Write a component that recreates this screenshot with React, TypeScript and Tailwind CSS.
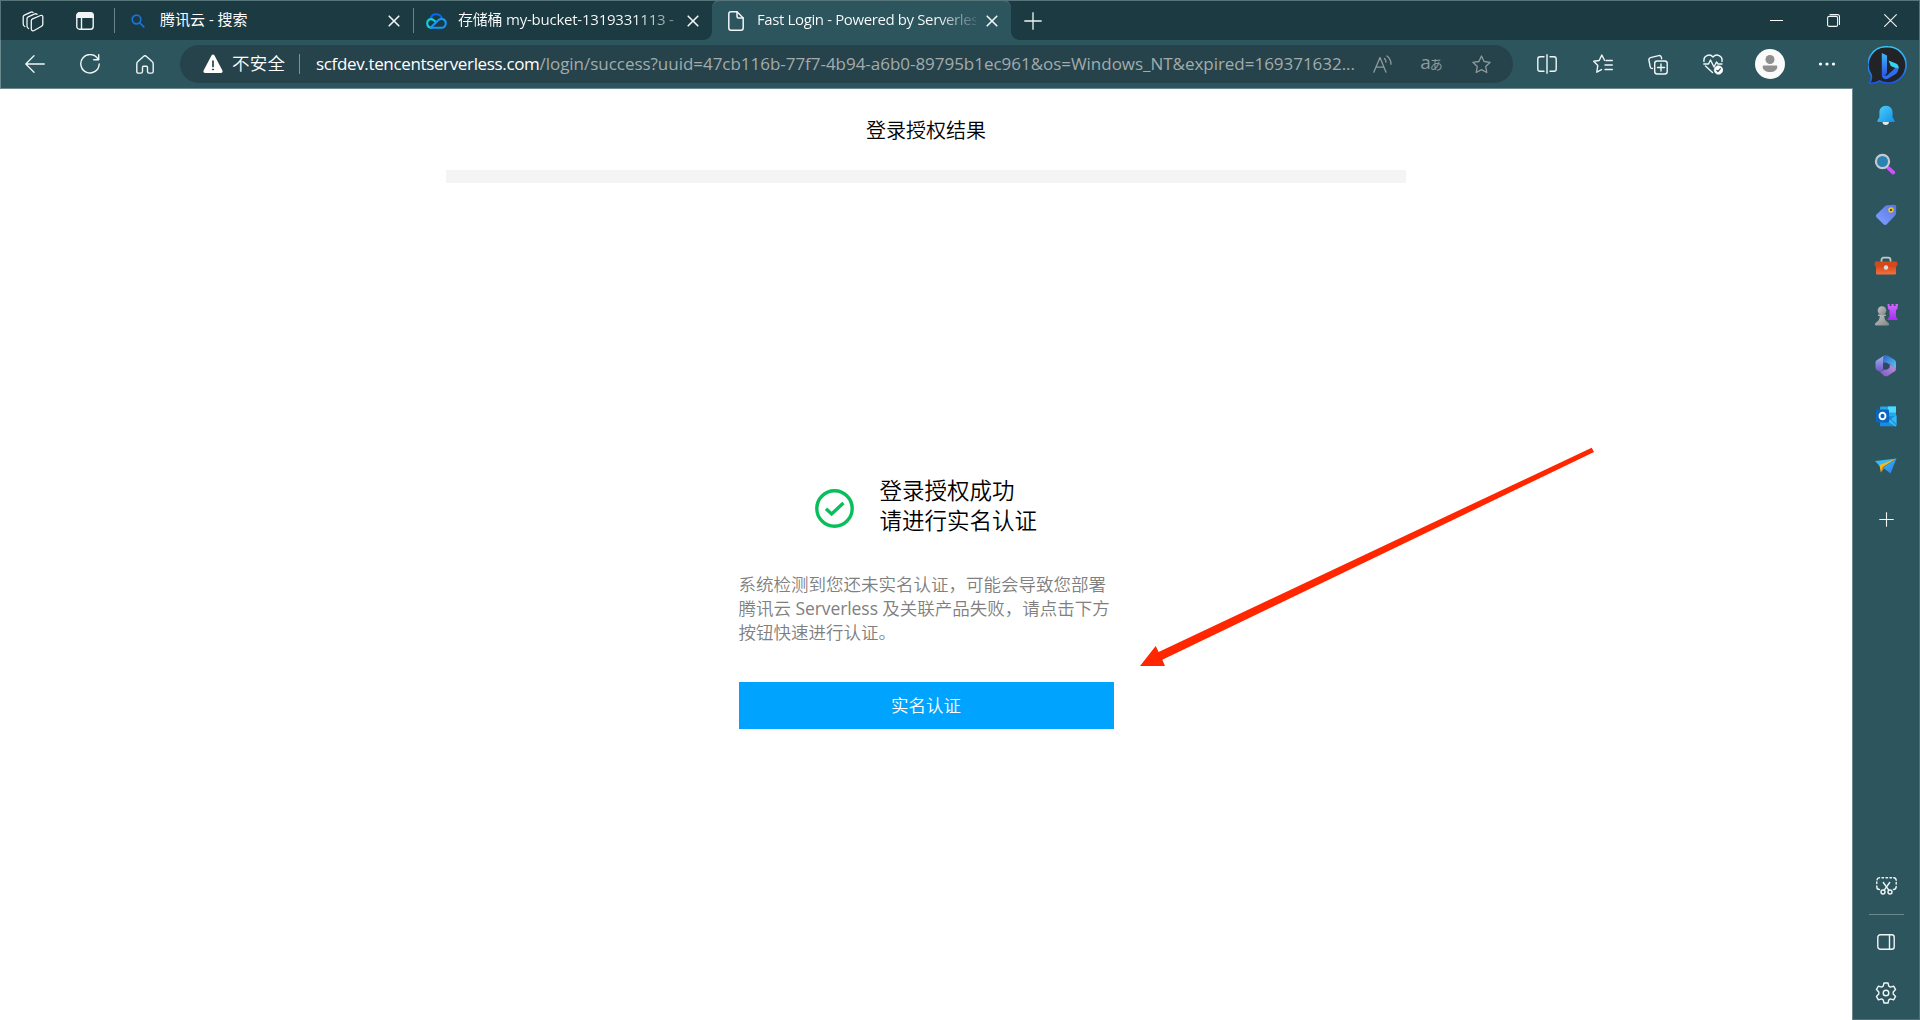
import React from "react";

type SvgProps = { w: number; h: number; children: React.ReactNode; color?: string; sw?: number };

function Svg({ w, h, children, color = "#f1f5f6", sw = 1.3 }: SvgProps) {
  return (
    <svg
      width={w}
      height={h}
      viewBox={`0 0 ${w} ${h}`}
      fill="none"
      stroke={color}
      strokeWidth={sw}
      strokeLinecap="round"
      strokeLinejoin="round"
      className="block shrink-0"
    >
      {children}
    </svg>
  );
}

function Cell({ className, children }: { className: string; children: React.ReactNode }) {
  return <div className={`flex shrink-0 items-center justify-center ${className}`}>{children}</div>;
}

const CloseTab = () => (
  <Svg w={12} h={12} sw={1.6}>
    <path d="M1.2 1.2 10.8 10.8M10.8 1.2 1.2 10.8" />
  </Svg>
);

const Plus = ({ size }: { size: number }) => (
  <svg width={size} height={size} viewBox="0 0 18 18" stroke="#f1f5f6" strokeWidth="1.3" className="block">
    <path d="M9 .3v17.4M.3 9h17.4" />
  </svg>
);

function TitleBar() {
  return (
    <div className="flex h-10 w-full shrink-0 items-center border-x border-t border-[#56757b] bg-[#1b3a42]">
      <Cell className="ml-[5px] w-[53px]">
        <Svg w={22} h={22} sw={1.3}>
          <path d="M1.2 14V7c0-.9.4-1.500 1.200-1.900l6.600-3c.8-.3 1.600-.1 2.100.3M1.200 14c0 1.300.5 2 1.600 2.500M5 16V8.800c0-.9.4-1.500 1.200-1.900l6.600-3c.9-.3 1.700-.1 2.200.4M5 16c0 1.300.500 2 1.600 2.500" />
          <path d="M10.600 8.900 18.500 5.500c1.200-.5 2.300.2 2.300 1.500v7.300c0 .9-.4 1.500-1.200 1.900l-7.400 4.300c-1.200.7-2.900.1-2.900-1.600v-8.100c0-.9.500-1.500 1.300-1.900Z" />
        </Svg>
      </Cell>
      <Cell className="w-[51px]">
        <Svg w={18} h={18} sw={1.4}>
          <rect x=".8" y=".8" width="16.4" height="16.4" rx="2.8" />
          <path d="M.8 5.2h16.4M5.500 5v12" />
          <path d="M1 5V3.500Q1 1 3.500 1h11Q17 1 17 3.500V5Z" fill="#f1f5f6" />
        </Svg>
      </Cell>
      <div className="ml-[4px] h-[25px] w-px bg-[#6b8388]" />

      <div className="flex h-full w-[298px] items-center">
        <Cell className="ml-[16px] w-[14px]">
          <Svg w={14} h={14} color="#1a73d6" sw={1.7}>
            <circle cx="5.500" cy="5.500" r="4.300" />
            <path d="m8.800 8.800 4 4" />
          </Svg>
        </Cell>
        <span className="mb-[2px] ml-[15px] w-[217px] whitespace-nowrap text-[15px] text-white">腾讯云 - 搜索</span>
        <Cell className="w-[34px]">
          <CloseTab />
        </Cell>
      </div>
      <div className="h-[25px] w-px bg-[#6b8388]" />

      <div className="flex h-full w-[298px] items-center">
        <Cell className="ml-[12px] w-[21px]">
          <Svg w={21} h={16} sw={2.1}>
            <path d="M4.600 6.200C5 3.200 7.200 1.300 10.200 1.300c2.700 0 4.800 1.500 5.700 4" stroke="#0a66f5" />
            <path d="M10.200 9.200 7.800 7.200C4.500 4.600 1.100 7 1.200 10.200c.1 2.700 2 4.500 4.500 4.500" stroke="#12d4d8" />
            <path d="M5.700 14.700h9.800c2.500 0 4.300-1.900 4.300-4.400 0-4-4.600-5.800-7.300-3.200L5 14.200" stroke="#1597f8" />
          </Svg>
        </Cell>
        <span className="mb-[2px] ml-[11px] w-[220px] overflow-hidden whitespace-nowrap bg-gradient-to-r from-white from-80% to-[#1b3a42] to-115% bg-clip-text text-[15px] tracking-[-0.23px] text-transparent">
          存储桶 my-bucket-1319331113 -
        </span>
        <Cell className="w-[30px]">
          <CloseTab />
        </Cell>
      </div>

      <div className="relative -mt-px flex h-10 w-[299px] items-center rounded-t-lg border-t border-[#56757b] bg-[#2d555e]">
        <span className="absolute bottom-0 -left-2 h-2 w-2 bg-[radial-gradient(circle_at_0_0,#1b3a42_7.5px,#2d555e_8px)]" />
        <span className="absolute -right-2 bottom-0 h-2 w-2 bg-[radial-gradient(circle_at_100%_0,#1b3a42_7.5px,#2d555e_8px)]" />
        <Cell className="ml-[15px] w-[17px]">
          <Svg w={16} h={20} sw={1.5}>
            <path d="M9 .8H3C1.700.8.8 1.700.8 3v14c0 1.300.9 2.200 2.200 2.200h10c1.300 0 2.200-.9 2.200-2.200V7L9 .8Z" />
            <path d="M9 1v4.500C9 6.500 9.500 7 10.500 7H15" />
          </Svg>
        </Cell>
        <span className="mb-[2px] ml-[13px] w-[219px] overflow-hidden whitespace-nowrap bg-gradient-to-r from-white from-82% to-[#2d555e] to-103% bg-clip-text text-[15px] tracking-[-0.38px] text-transparent">
          Fast Login - Powered by Serverles
        </span>
        <Cell className="w-[32px]">
          <CloseTab />
        </Cell>
      </div>
      <Cell className="ml-[12px] w-[20px]">
        <Plus size={18} />
      </Cell>

      <div className="ml-auto flex items-center">
        <Cell className="w-[58px]">
          <div className="h-px w-[13px] bg-white" />
        </Cell>
        <Cell className="w-[57px]">
          <Svg w={13} h={13} sw={1.1}>
            <rect x=".6" y="2.400" width="10" height="10" rx="1.500" />
            <path d="M3 .6h7.500c1.200 0 2 .8 2 2v7.800" />
          </Svg>
        </Cell>
        <Cell className="w-[57px]">
          <Svg w={13} h={13} sw={1.1}>
            <path d="m.6.6 11.800 11.800M12.400.6.6 12.400" />
          </Svg>
        </Cell>
      </div>
    </div>
  );
}

const STAR = "m9.500 1 2.600 5.500 6 .800-4.400 4.200 1.100 6-5.300-2.900-5.300 2.900 1.100-6L.9 7.300l6-.8L9.500 1Z";

function Toolbar() {
  return (
    <div className="flex h-[49px] shrink-0 items-center border-b border-l border-[#6b888e] bg-[#2d555e] pl-[6.5px]">
      <Cell className="w-[55px]">
        <Svg w={20} h={18}>
          <path d="M19.300 9H.8M9 .8.8 9 9 17.200" />
        </Svg>
      </Cell>
      <Cell className="w-[55px]">
        <Svg w={20} h={20} sw={1.4}>
          <path d="M18 5.200A9.200 9.200 0 1 0 19.200 10" />
          <path d="M18.700.8v5h-5" />
        </Svg>
      </Cell>
      <Cell className="w-[55px]">
        <Svg w={18} h={19} sw={1.4}>
          <path d="M7.800 1.200c.7-.6 1.700-.6 2.400 0l5.900 5.300c.700.600 1.100 1.500 1.100 2.400v7.600c0 .900-.7 1.600-1.600 1.600h-2.500c-.9 0-1.600-.7-1.600-1.600v-4.200c0-.6-.4-1-1-1h-3c-.6 0-1 .4-1 1v4.200c0 .9-.7 1.600-1.600 1.600H2.400c-.9 0-1.600-.7-1.600-1.600V8.900c0-.9.4-1.800 1.100-2.400l5.900-5.300Z" />
        </Svg>
      </Cell>

      <div className="ml-[7.5px] flex h-[38px] w-[1333px] shrink-0 items-center rounded-full bg-[#26434b] pl-[23px]">
        <Svg w={20} h={20} sw={1}>
          <path d="M8.600 1.200c.6-1 2.200-1 2.800 0l8 15.200c.6 1.200-.1 2.600-1.400 2.600H2c-1.300 0-2-1.400-1.400-2.600l8-15.200Z" fill="#fff" stroke="none" />
          <path d="M10 7v5.500" stroke="#26434b" strokeWidth="1.700" />
          <circle cx="10" cy="15.500" r=".6" fill="#26434b" stroke="#26434b" />
        </Svg>
        <span className="mb-[1px] ml-[9px] w-[53px] whitespace-nowrap text-[17.500px] tracking-[0.2px] font-[350] text-white">不安全</span>
        <div className="ml-[14px] h-[20px] w-px bg-[#7d9095]" />
        <div className="mb-[1px] ml-[16px] w-[1041px] overflow-hidden whitespace-nowrap text-[17px] text-[#a3abad]">
          <span className="tracking-[-0.35px] text-white">scfdev.tencentserverless.com</span>
          <span className="tracking-[-0.03px]">
            /login/success?uuid=47cb116b-77f7-4b94-a6b0-89795b1ec961&amp;os=Windows_NT&amp;expired=169371632...
          </span>
        </div>
        <Cell className="w-[50px]">
          <Svg w={19} h={18} color="#8e9a9d">
            <path d="M.8 17.200 7 2.500l6 14.700M3 12.200h7.800M11.500 3.500c1 1 1.500 2.200 1.500 3.700M14 .9c2.600 2 4 4.800 4 8.300" />
          </Svg>
        </Cell>
        <Cell className="w-[49px]">
          <span className="mb-[3px] flex items-baseline text-[#8e9a9d]">
            <span className="text-[19px] leading-none">a</span>
            <span className="-ml-px text-[13px] leading-none">あ</span>
          </span>
        </Cell>
        <Cell className="w-[50px]">
          <Svg w={19} h={19} color="#8e9a9d">
            <path d={STAR} />
          </Svg>
        </Cell>
      </div>

      <Cell className="ml-[6.5px] w-[55px]">
        <Svg w={20} h={20} sw={1.4}>
          <path d="M7 2.700H3C1.700 2.700.8 3.600.8 4.900v10.200c0 1.300.9 2.200 2.200 2.200h4M13 2.700h4c1.300 0 2.200.9 2.200 2.200v10.200c0 1.300-.9 2.200-2.200 2.200h-4M10 .8v18.400" />
        </Svg>
      </Cell>
      <Cell className="w-[56px]">
        <Svg w={20} h={20} sw={1.4}>
          <path d="M11.500 6.300 8.800 1 6.200 6.500l-5.500.8 4.100 4.200-1 6.700 4.700-2.600M13 6.500h6.300M12 11h7.300M12 15.500h7.300" />
        </Svg>
      </Cell>
      <Cell className="w-[55px]">
        <Svg w={20} h={21} sw={1.4}>
          <path d="M4.500 14.500c-1.300 0-2-.5-2.300-1.700L.9 6c-.2-1.300.4-2.100 1.600-2.400l8.200-2c1.200-.3 2.100.2 2.500 1.400l.5 1.700" />
          <rect x="6.700" y="7" width="12.500" height="13" rx="2.500" />
          <path d="M13 10v7M9.500 13.500h7" />
        </Svg>
      </Cell>
      <Cell className="w-[55px]">
        <Svg w={20} h={21} sw={1.4}>
          <path d="M9.500 18.500 2.500 12M1 7.500C.1 2 6.500-1 10 3c3.500-4 9.900-1 9 4.500M.8 10h4.700L7.500 6l3.500 7 2.500-5 1.500 2h4" />
          <circle cx="15.500" cy="16" r="4.300" fill="#fff" stroke="#fff" strokeWidth=".6" />
          <path d="m13.700 16.300 1.300 1.200 2.400-2.800" stroke="#2d555e" strokeWidth="1.200" />
        </Svg>
      </Cell>
      <Cell className="w-[59px]">
        <svg width="30" height="30" viewBox="0 0 30 30" className="block">
          <circle cx="15" cy="15" r="15" fill="#fafafa" />
          <circle cx="15" cy="10.500" r="4.500" fill="#8f8f8f" />
          <path d="M9 16.500h12c.8 0 1.300.5 1.300 1.300 0 3.200-3 5.300-7.300 5.300s-7.300-2.100-7.300-5.300c0-.8.5-1.300 1.300-1.300Z" fill="#8f8f8f" />
        </svg>
      </Cell>
      <Cell className="w-[56px]">
        <svg width="18" height="4" viewBox="0 0 18 4" fill="#fff" className="mr-[1px] mb-[1px] block">
          <circle cx="2.500" cy="2" r="1.600" />
          <circle cx="9" cy="2" r="1.600" />
          <circle cx="15.500" cy="2" r="1.600" />
        </svg>
      </Cell>
    </div>
  );
}

function Gradients() {
  return (
    <svg width="0" height="0" className="absolute">
      <defs>
        <linearGradient id="ring" x1="0" y1="0" x2="0" y2="1">
          <stop offset="0" stopColor="#35c8f5" />
          <stop offset="1" stopColor="#1b55e8" />
        </linearGradient>
        <linearGradient id="bstem" x1="0" y1="0" x2="0" y2="1">
          <stop offset="0" stopColor="#3fb6f5" />
          <stop offset="1" stopColor="#2a4fe0" />
        </linearGradient>
        <linearGradient id="bell" x1="0" y1="0" x2="1" y2="1">
          <stop offset="0" stopColor="#4fd0fb" />
          <stop offset="1" stopColor="#1390e6" />
        </linearGradient>
        <linearGradient id="tag" x1="1" y1="0" x2="0" y2="1">
          <stop offset="0" stopColor="#5b72e8" />
          <stop offset="1" stopColor="#7fa4ff" />
        </linearGradient>
        <linearGradient id="box" x1="0" y1="0" x2="0" y2="1">
          <stop offset="0" stopColor="#cf3f12" />
          <stop offset="1" stopColor="#f4713f" />
        </linearGradient>
        <linearGradient id="rook" x1="0" y1="0" x2="0" y2="1">
          <stop offset="0" stopColor="#d468ff" />
          <stop offset="1" stopColor="#a42df0" />
        </linearGradient>
        <linearGradient id="pawn" x1="0" y1="0" x2="1" y2="1">
          <stop offset="0" stopColor="#c4c4c4" />
          <stop offset="1" stopColor="#858585" />
        </linearGradient>
        <linearGradient id="m1" x1="0" y1="0" x2="1" y2="1">
          <stop offset="0" stopColor="#2f62c8" />
          <stop offset="1" stopColor="#58c7f5" />
        </linearGradient>
        <linearGradient id="m2" x1="0" y1="0" x2="0" y2="1">
          <stop offset="0" stopColor="#9db8ee" />
          <stop offset="1" stopColor="#7154c4" />
        </linearGradient>
        <linearGradient id="m3" x1="1" y1="0" x2="0" y2="1">
          <stop offset="0" stopColor="#c494e0" />
          <stop offset="1" stopColor="#7a58c4" />
        </linearGradient>
        <linearGradient id="plane" x1="0" y1="0" x2="1" y2="1">
          <stop offset="0" stopColor="#36c3f2" />
          <stop offset="1" stopColor="#2f73ee" />
        </linearGradient>
      </defs>
    </svg>
  );
}

function Sidebar() {
  return (
    <aside className="relative flex w-[67px] shrink-0 flex-col items-center border-r border-b border-[#4f7078] bg-[#2d555e]">
      <Gradients />
      <Cell className="mt-[4px] ml-[2px] h-[42px]">
        <svg width="39" height="41" viewBox="0 0 39 41" className="block">
          <path d="M20 1.800A17.800 17.800 0 0 1 20 38c-3 0-5.700-.6-8.300-2-2.700 2-6 2.500-10.200 2.200 2.200-2.700 2.400-4.700 1.600-8.500A18 18 0 0 1 20 1.800Z" fill="#212326" stroke="url(#ring)" strokeWidth="1.600" />
          <path d="m13.800 8 5.200 2.500v17l-2.500 4.700-2.700-2.200V8Z" fill="url(#bstem)" />
          <path d="m20.500 15.500 7.500 3c2.500 1.200 3.200 3.500 2.300 5.800l-3.500-1.600-4-1.800-2.300-5.400Z" fill="#35d2f4" />
          <path d="M13.800 29.500c1.500 2 3.500 2 5.200.9l8.500-7.700 2.800.8c.2 2.500-1 4.500-3 5.700l-7.500 4.500c-3.500 1.500-6-.7-6-4.200Z" fill="#2f6df0" />
        </svg>
      </Cell>
      <Cell className="mt-[4px] h-[50px]">
        <svg width="20" height="21" viewBox="0 0 20 21" className="block">
          <path d="M6.500 17h6.500c0 4-6.500 4-6.500 0Z" fill="#e8e8e8" />
          <path d="M10 .7c4.200 0 6.600 3 6.600 7v4.500l2 3.300c.3.700 0 1.500-.9 1.500H2.300c-.9 0-1.200-.8-.9-1.500l2-3.300V7.700c0-4 2.400-7 6.600-7Z" fill="url(#bell)" />
        </svg>
      </Cell>
      <Cell className="h-[50px] w-[24px]">
        <svg width="22" height="22" viewBox="0 0 22 22" className="-mt-[3px] mr-[2px] block">
          <path d="m14.500 15.200 4.700 4.300" stroke="#d44dff" strokeWidth="3.800" strokeLinecap="round" />
          <circle cx="8.500" cy="8.500" r="6.600" fill="#2a82b3" stroke="#c9c9c9" strokeWidth="2.200" />
        </svg>
      </Cell>
      <Cell className="h-[50px]">
        <svg width="22" height="22" viewBox="0 0 22 22" className="block">
          <path d="M12.500 1.300 19 .8c1.400 0 2.200.8 2.200 2.200L21 9.500c0 .8-.3 1.500-.9 2.100l-8.300 8.700c-1 1-2.300 1-3.300 0L1.700 13.500c-1-1-1-2.300 0-3.300l8.600-8.100c.6-.5 1.300-.8 2.200-.8Z" fill="url(#tag)" />
          <circle cx="16" cy="6" r="1.900" fill="#333" stroke="#e8c71a" strokeWidth="1.600" />
        </svg>
      </Cell>
      <Cell className="h-[51px]">
        <svg width="24" height="20" viewBox="0 0 24 20" className="block">
          <path d="M7.500 6V4c0-1.500.8-2.300 2.300-2.300h4.400c1.500 0 2.300.8 2.300 2.300v2" fill="none" stroke="#c6cbcc" strokeWidth="1.700" />
          <rect x="2" y="8" width="20" height="10.500" rx="1.300" fill="url(#box)" />
          <rect x=".8" y="5.500" width="22.400" height="5" rx="1" fill="#d4491c" />
          <circle cx="12" cy="11.500" r="2.200" fill="#d9dcdc" />
        </svg>
      </Cell>
      <Cell className="h-[49px]">
        <svg width="24" height="24" viewBox="0 0 24 24" className="-mt-px block">
          <path d="M13.500 1h2v2h2V1h2.200v2h1.800V1H24l-.6 5-1.400 1v6.500l2 3.500H13l2.500-3.500V7L14 6l-.5-5Z" fill="url(#rook)" />
          <circle cx="8" cy="7.500" r="4.300" fill="url(#pawn)" />
          <path d="M4 11.500h8v1.600h-1.800c.2 2.700 1 4.500 2.800 5.700l1.700 1.400c.5.500.6 2.300-.7 2.300H2c-1.300 0-1.200-1.800-.7-2.300L3 18.800c1.800-1.200 2.600-3 2.800-5.700H4v-1.600Z" fill="url(#pawn)" />
        </svg>
      </Cell>
      <Cell className="h-[51px]">
        <svg width="22" height="22" viewBox="0 0 22 22" className="block">
          <path d="M10.500.4 8.200 5.500v9l-3 2.500-3-1.500C1 14.700.5 13.500.5 12V7.500c0-1.200.5-2 1.500-2.600L8.500 1l2-.6Z" fill="url(#m2)" />
          <path d="M9 .8c1.300-.7 2.600-.7 3.900 0l6.200 3.700c1.300.8 1.900 1.800 1.900 3.200v5.500l-5.800-3.700L8.200 7V3.500C8.200 2.200 8.200 1.400 9 .8Z" fill="url(#m1)" />
          <path d="m5 17 9.500-5V9.300l5.300 2.900c1 .6 1.300 1.500 1 2.700-.2.700-.8 1.300-1.400 1.700l-6.300 4.100c-1.300.8-2.800.8-4.100 0L5 17Z" fill="url(#m3)" />
          <path d="m11 7.500 3.500 2v3.500L11 15l-3-2V9.200L11 7.500Z" fill="#2d4a60" />
        </svg>
      </Cell>
      <Cell className="h-[50px]">
        <svg width="21" height="21" viewBox="0 0 21 21" className="block">
          <rect x="4" y=".5" width="16" height="14" rx="1" fill="#28a8ea" />
          <rect x="12" y=".5" width="8" height="6" fill="#50d9ff" />
          <path d="M4 10 20.500 10v9.200c0 .7-.4 1.100-1.100 1.100H4V10Z" fill="#1490df" />
          <path d="m20.500 9-9 6.500 8 5c.6-.2 1-.6 1-1.200V9Z" fill="#35b8f1" />
          <path d="M12 10.500 20.500 19" stroke="#0c63b5" strokeWidth=".8" />
          <rect x="0" y="3.500" width="13" height="13" rx="1.200" fill="#0a64c2" />
          <ellipse cx="6.500" cy="10" rx="3" ry="3.300" fill="none" stroke="#fff" strokeWidth="1.900" />
        </svg>
      </Cell>
      <Cell className="h-[49px]">
        <svg width="22" height="16" viewBox="0 0 22 16" className="block">
          <path d="M0 3 21.500.5 5 8.500 0 3Z" fill="#3bb8f0" />
          <path d="M21.500.5 15.500 15.500 8 9.500 21.500.5Z" fill="url(#plane)" />
          <path d="M21.500.5 4.500 7l1.300 7.500 2.200-5.500L21.500.5Z" fill="#f7b71d" />
          <path d="M8 9 5.800 14.500 8.800 11 8 9Z" fill="#d98e0c" />
        </svg>
      </Cell>
      <Cell className="h-[58px]">
        <Plus size={15} />
      </Cell>

      <div className="mt-auto flex flex-col items-center">
        <Cell className="h-[28px]">
          <Svg w={21} h={18} sw={1.4}>
            <path d="M3.500 12.500C1.500 12.500.8 11.500.8 10V9M.8 6.500V5M1 2.800C1.300 1.500 2 .8 3.500.8M6 .8h1.500M10 .8h1.500M14 .8h1.500M17.800.8c1.500.2 2.300 1 2.400 2.500M20.200 5.500V7M20.200 9.500c0 1.700-.8 3-2.700 3" />
            <path d="m7.300 5.500 5.500 7.700M13.700 5.500l-5.500 7.700" />
            <circle cx="7" cy="15" r="2" />
            <circle cx="14" cy="15" r="2" />
          </Svg>
        </Cell>
        <div className="mt-[14px] h-px w-[35px] bg-[#6d888e]" />
        <Cell className="mt-[1px] h-[51px]">
          <Svg w={18} h={16} sw={1.4}>
            <rect x=".8" y=".8" width="16.400" height="14.400" rx="2.500" />
            <path d="M12.500 1v14" />
          </Svg>
        </Cell>
        <Cell className="mb-[1px] h-[51px]">
          <Svg w={22} h={22} sw={1.4}>
            <circle cx="11" cy="11" r="2.800" />
            <path d="M9 1h4l.8 3.200 1.600.9 3.200-1 2 3.500-2.400 2.300v2.200l2.400 2.300-2 3.500-3.200-1-1.600.9L13 21H9l-.8-3.200-1.600-.9-3.200 1-2-3.500 2.400-2.300V9.900L1.400 7.600l2-3.500 3.200 1 1.600-.9L9 1Z" />
          </Svg>
        </Cell>
      </div>
    </aside>
  );
}

function Page() {
  return (
    <main className="relative flex min-h-0 flex-1 flex-col items-center border-r border-[#6b888e] bg-white">
      <h1 className="mt-[27px] text-[20px] leading-[30px] font-[350] text-black">登录授权结果</h1>
      <div className="mt-[24px] h-[13px] w-[960px] bg-[#f4f4f4]" />
      <section className="mt-[293px] flex w-[375px] flex-col">
        <div className="flex items-center pl-[76px]">
          <svg width="39" height="39" viewBox="0 0 39 39" fill="none" stroke="#0abf5b" className="mt-[5px] block">
            <circle cx="19.500" cy="19.500" r="17.700" strokeWidth="3.400" />
            <path d="m11 19.800 5.600 5.200 11.800-11" strokeWidth="3.400" />
          </svg>
          <div className="ml-[26px] text-[22.5px] leading-[30px] font-[350] text-black">
            <div>登录授权成功</div>
            <div>请进行实名认证</div>
          </div>
        </div>
        <div className="mt-[36px] whitespace-nowrap text-[17.5px] leading-[24px] font-[350] text-[#808080]">
          <p>系统检测到您还未实名认证，可能会导致您部署</p>
          <p>
            腾讯云<span className="font-normal tracking-[-0.08px]"> Serverless </span>及关联产品失败，请点击下方
          </p>
          <p>按钮快速进行认证。</p>
        </div>
        <button className="mt-[38px] h-[47px] w-full bg-[#00a4ff] text-[17.5px] font-[350] text-white">实名认证</button>
      </section>
      <svg width="456" height="220" viewBox="1139 447 456 220" className="absolute top-[358px] left-[1139px]">
        <path d="M1140 666 1155.700 646l2.900 6L1591.700 447.700l2.300 4.400L1162.300 659.700l2.700 6.300Z" fill="#ff2600" />
      </svg>
    </main>
  );
}

export default function App() {
  return (
    <div className="flex h-[1020px] w-[1920px] flex-col overflow-hidden bg-white font-['Open_Sans','Noto_Sans_CJK_SC',sans-serif]">
      <TitleBar />
      <div className="flex min-h-0 flex-1">
        <div className="flex w-[1853px] shrink-0 flex-col">
          <Toolbar />
          <Page />
        </div>
        <Sidebar />
      </div>
    </div>
  );
}
